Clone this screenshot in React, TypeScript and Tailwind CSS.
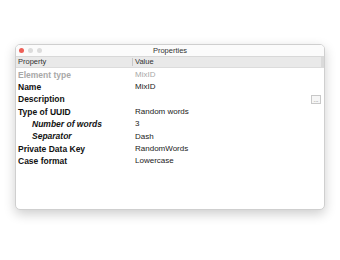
import React from 'react';

type Row = { label: string; value: string; kind?: 'muted' | 'sub'; button?: boolean };

const rows: Row[] = [
  { label: 'Element type', value: 'MixID', kind: 'muted' },
  { label: 'Name', value: 'MixID' },
  { label: 'Description', value: '', button: true },
  { label: 'Type of UUID', value: 'Random words' },
  { label: 'Number of words', value: '3', kind: 'sub' },
  { label: 'Separator', value: 'Dash', kind: 'sub' },
  { label: 'Private Data Key', value: 'RandomWords' },
  { label: 'Case format', value: 'Lowercase' },
];

const App = () => {
  return (
    <div className="w-[340px] h-[260px] bg-white pt-[44px] pl-[15px]" style={{ fontFamily: '"Liberation Sans", Arial, sans-serif' }}>
      <div className="w-[310px] h-[166px] bg-white rounded-[5px] border border-[#cfcfcf] shadow-[0_4px_12px_rgba(0,0,0,0.2)] overflow-hidden flex flex-col">
        {/* title bar */}
        <div className="h-[12px] relative flex items-center justify-center border-b border-[#d8d8d8] bg-[#fbfbfb]">
          <div className="absolute left-[3px] top-[3px] flex gap-[4px]">
            <span className="w-[5px] h-[5px] rounded-full bg-[#ee5f57]" />
            <span className="w-[5px] h-[5px] rounded-full bg-[#dcdcdc]" />
            <span className="w-[5px] h-[5px] rounded-full bg-[#dcdcdc]" />
          </div>
          <span className="text-[7.5px] text-[#333]">Properties</span>
        </div>
        {/* header */}
        <div className="h-[11px] flex items-center bg-[#e9e9e9] border-b border-[#dcdcdc] text-[7.5px] text-[#333]">
          <div className="w-[116px] pl-[2px]">Property</div>
          <div className="w-px h-[8px] bg-[#c8c8c8]" />
          <div className="flex-1 pl-[2px]">Value</div>
          <div className="w-[3px] h-full bg-[#dadada]" />
        </div>
        {/* rows */}
        <div className="flex flex-col pt-[1px]">
          {rows.map((r) => (
            <div key={r.label} className="h-[12.3px] flex items-center">
              <div
                className={
                  'w-[117px] text-[8.5px] font-bold ' +
                  (r.kind === 'muted' ? 'text-[#a8a8a8] pl-[2px]' : r.kind === 'sub' ? 'italic text-[#111] pl-[16px]' : 'text-[#111] pl-[2px]')
                }
              >
                {r.label}
              </div>
              <div className={'flex-1 pl-[2px] text-[8px] ' + (r.kind === 'muted' ? 'text-[#a8a8a8]' : 'text-[#222]')}>
                {r.value}
              </div>
              {r.button && (
                <div className="mr-[3px] w-[10px] h-[9px] border border-[#c8c8c8] bg-[#f6f6f6] flex items-center justify-center text-[6px] leading-none text-[#666]">
                  ...
                </div>
              )}
            </div>
          ))}
        </div>
      </div>
    </div>
  );
};

export default App;
